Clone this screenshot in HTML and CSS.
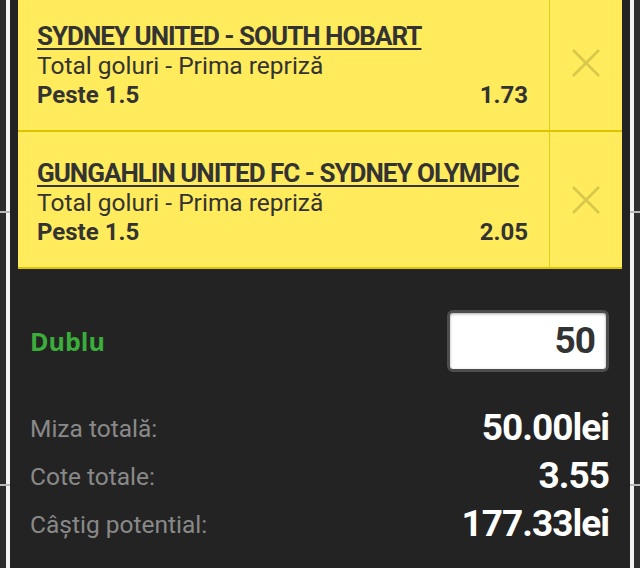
FILE: index.html
```html
<!DOCTYPE html>
<html lang="ro">
<head>
<meta charset="utf-8">
<title>Bilet</title>
<link rel="stylesheet" href="styles.css">
</head>
<body>
<div class="screen">
  <div class="edge edge-left"></div>
  <main class="slip">
    <ul class="bets">
      <li class="bet">
        <div class="bet-info">
          <div class="bet-match">SYDNEY UNITED - SOUTH HOBART</div>
          <div class="bet-market">Total goluri - Prima repriză</div>
          <div class="bet-pick"><span>Peste 1.5</span><span>1.73</span></div>
        </div>
        <div class="bet-remove">
          <svg width="28" height="28" viewBox="0 0 28 28"><path d="M1 1 L27 27 M27 1 L1 27" /></svg>
        </div>
      </li>
      <li class="bet">
        <div class="bet-info">
          <div class="bet-match">GUNGAHLIN UNITED FC - SYDNEY OLYMPIC</div>
          <div class="bet-market">Total goluri - Prima repriză</div>
          <div class="bet-pick"><span>Peste 1.5</span><span>2.05</span></div>
        </div>
        <div class="bet-remove">
          <svg width="28" height="28" viewBox="0 0 28 28"><path d="M1 1 L27 27 M27 1 L1 27" /></svg>
        </div>
      </li>
    </ul>
    <section class="stake-row">
      <span class="bet-type">Dublu</span>
      <div class="stake-input">50</div>
    </section>
    <dl class="totals">
      <div class="total-row"><dt>Miza totală:</dt><dd>50.00lei</dd></div>
      <div class="total-row"><dt>Cote totale:</dt><dd>3.55</dd></div>
      <div class="total-row"><dt>Câştig potential:</dt><dd>177.33lei</dd></div>
    </dl>
  </main>
  <div class="edge edge-right"></div>
</div>
</body>
</html>
```

FILE: styles.css
```css
* { box-sizing: border-box; }

html, body {
  margin: 0;
  padding: 0;
  background: #2b2b2b;
}

body {
  font-family: Roboto, "Liberation Sans", sans-serif;
}

.screen {
  display: grid;
  grid-template-columns: 10px 620px 10px;
  width: 640px;
  height: 568px;
  overflow: hidden;
}

.edge {
  height: 568px;
}

.edge-left {
  background:
    linear-gradient(to bottom, transparent 211px, #b9b9b9 211px 213px, transparent 213px 484px, #b9b9b9 484px 486px, transparent 486px),
    linear-gradient(to right, #2b2b2b 0 6px, #f3f3f3 6px 10px);
}

.edge-right {
  background:
    linear-gradient(to bottom, transparent 211px, #b9b9b9 211px 213px, transparent 213px 484px, #b9b9b9 484px 486px, transparent 486px),
    linear-gradient(to right, #f3f3f3 0 4px, #2e2e2e 4px 10px);
}

.slip {
  background: #232323;
  overflow: hidden;
  height: 568px;
}

.bets {
  list-style: none;
  margin: -5px 8px 0 8px;
  padding: 0;
}

.bet {
  display: flex;
  height: 137px;
  background: #ffeb5c;
  border-bottom: 2px solid #dcc500;
  color: #333;
}

.bet-info {
  flex: 1;
  min-width: 0;
  padding: 26px 21px 0 19px;
}

.bet-match {
  font-weight: 700;
  font-size: 26px;
  line-height: 30px;
  letter-spacing: -1px;
  white-space: nowrap;
  text-decoration: underline;
  text-decoration-thickness: 2px;
  text-underline-offset: 3px;
}

.bet-market {
  font-size: 24.5px;
  line-height: 30px;
}

.bet-pick {
  display: flex;
  justify-content: space-between;
  font-weight: 700;
  font-size: 24px;
  line-height: 28px;
}

.bet-remove {
  width: 73px;
  border-left: 1px solid #e2cc1e;
  display: flex;
  align-items: center;
  justify-content: center;
}

.bet-remove svg path {
  fill: none;
  stroke: #d8c94c;
  stroke-width: 2.8;
}

.stake-row {
  display: flex;
  justify-content: space-between;
  align-items: center;
  margin-top: 41px;
  padding: 0 21px 0 20px;
}

.bet-type {
  font-family: "Open Sans", "Noto Sans", sans-serif;
  font-weight: 700;
  font-size: 25px;
  color: #3aad3a;
}

.stake-input {
  width: 162px;
  height: 62px;
  border: 3px solid #4d4d4d;
  border-radius: 6px;
  background: #fff;
  box-shadow: inset 0 1px 3px rgba(0, 0, 0, 0.35);
  text-align: right;
  padding-right: 11px;
  font-weight: 700;
  font-size: 37px;
  letter-spacing: -1px;
  line-height: 56px;
  color: #333;
}

.totals {
  margin: 32px 0 0 0;
  padding: 0 21px 0 20px;
}

.total-row {
  display: flex;
  justify-content: space-between;
  align-items: center;
  height: 48px;
}

.total-row dt {
  font-size: 24.5px;
  color: #898989;
}

.total-row dd {
  margin: 0;
  font-weight: 700;
  font-size: 37px;
  line-height: 48px;
  letter-spacing: -1px;
  color: #fff;
}
```
